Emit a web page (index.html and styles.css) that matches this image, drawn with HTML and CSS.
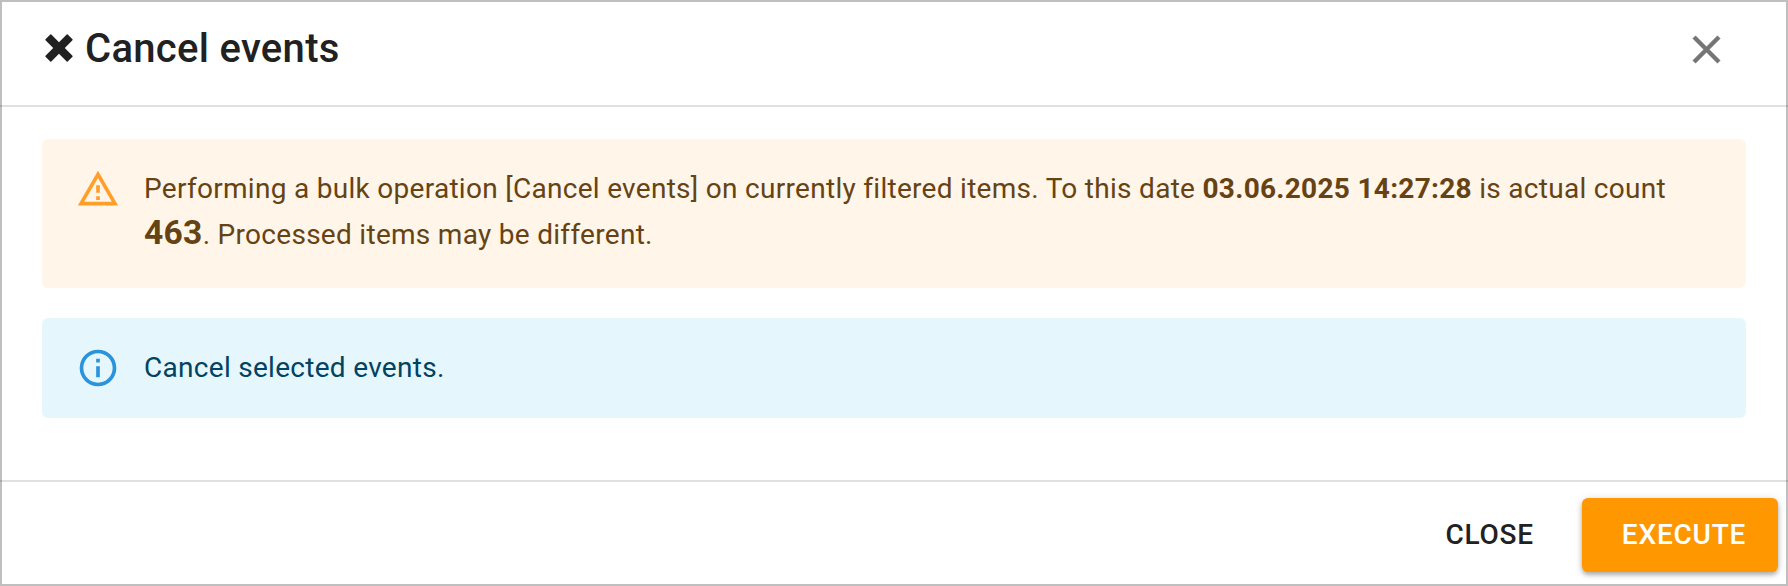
FILE: index.html
```html
<!DOCTYPE html>
<html lang="en">
<head>
    <meta charset="UTF-8">
    <meta name="viewport" content="width=device-width, initial-scale=1.0">
    <title>Cancel events</title>
    <link rel="stylesheet" href="styles.css">
</head>
<body>
    <div class="dialog" role="dialog" aria-labelledby="dialogTitle">
        <!-- Header -->
        <header class="dialog-header">
            <h2 class="dialog-title" id="dialogTitle">
                <svg class="title-icon" viewBox="0 0 27 27" aria-hidden="true">
                    <path d="M6.1 0.5L13.5 7.9L20.9 0.5Q21.4 0 21.9 0.5L26.5 5.1Q27 5.6 26.5 6.1L19.1 13.5L26.5 20.9Q27 21.4 26.5 21.9L21.9 26.5Q21.4 27 20.9 26.5L13.5 19.1L6.1 26.5Q5.6 27 5.1 26.5L0.5 21.9Q0 21.4 0.5 20.9L7.9 13.5L0.5 6.1Q0 5.6 0.5 5.1L5.1 0.5Q5.6 0 6.1 0.5Z"/>
                </svg>
                <span>Cancel events</span>
            </h2>
            <button class="icon-btn" aria-label="Close">
                <svg viewBox="0 0 24 24">
                    <path d="M19 6.41L17.59 5 12 10.59 6.41 5 5 6.41 10.59 12 5 17.59 6.41 19 12 13.41 17.59 19 19 17.59 13.41 12z"/>
                </svg>
            </button>
        </header>

        <!-- Content -->
        <main class="dialog-content">
            <div class="alert alert-warning">
                <svg class="alert-icon" viewBox="0 0 24 24" aria-hidden="true">
                    <path d="M12 5.99L19.53 19H4.47L12 5.99M12 2L1 21h22L12 2zm1 14h-2v2h2v-2zm0-6h-2v4h2v-4z"/>
                </svg>
                <p class="alert-message">Performing a bulk operation [Cancel events] on currently filtered items. To this date <strong>03.06.2025 14:27:28</strong> is actual count <strong class="count">463</strong>. Processed items may be different.</p>
            </div>
            <div class="alert alert-info">
                <svg class="alert-icon" viewBox="0 0 24 24" aria-hidden="true">
                    <path d="M11,9H13V7H11M12,20C7.59,20 4,16.41 4,12C4,7.59 7.59,4 12,4C16.41,4 20,7.59 20,12C20,16.41 16.41,20 12,20M12,2A10,10 0 0,0 2,12A10,10 0 0,0 12,22A10,10 0 0,0 22,12A10,10 0 0,0 12,2M11,17H13V11H11V17Z"/>
                </svg>
                <p class="alert-message">Cancel selected events.</p>
            </div>
        </main>

        <!-- Actions -->
        <footer class="dialog-actions">
            <button class="btn btn-text">Close</button>
            <button class="btn btn-primary">Execute</button>
        </footer>
    </div>
</body>
</html>
```

FILE: styles.css
```css
/* Reset and base styles */
* {
    margin: 0;
    padding: 0;
    box-sizing: border-box;
}

body {
    font-family: Roboto, "Liberation Sans", sans-serif;
    background: #fff;
    color: #212121;
}

/* Dialog */
.dialog {
    position: relative;
    display: flex;
    flex-direction: column;
    height: 100vh;
    overflow: hidden;
}

/* frame drawn over the dividers */
.dialog::after {
    content: "";
    position: absolute;
    inset: 0;
    border: 2px solid rgba(0, 0, 0, 0.25);
    pointer-events: none;
}

.dialog-header {
    display: flex;
    justify-content: space-between;
    align-items: center;
    height: 107px;
    padding: 0 58px 7px 42px;
    border-bottom: 2px solid #e0e0e0;
}

.dialog-title {
    display: flex;
    align-items: center;
    gap: 12px;
    padding-left: 3px;
    font-size: 40px;
    font-weight: 500;
    line-height: 64px;
    letter-spacing: 0.0075em;
}

.title-icon {
    width: 28px;
    height: 28px;
    margin-bottom: 3px;
    fill: currentColor;
}

.icon-btn {
    display: flex;
    border: none;
    background: transparent;
    cursor: pointer;
}

.icon-btn svg {
    width: 47px;
    height: 47px;
    fill: #757575;
    stroke: #757575;
    stroke-width: 0.25;
    stroke-linejoin: round;
}

.dialog-content {
    flex: 1;
    display: flex;
    flex-direction: column;
    gap: 30px;
    padding: 32px 42px;
}

/* Alerts */
.alert {
    display: flex;
    gap: 24px;
    padding: 28px 34px;
    border-radius: 6px;
    font-size: 28px;
    line-height: 1.43;
    letter-spacing: 0.0104em;
}

.alert-icon {
    flex-shrink: 0;
    width: 44px;
    height: 44px;
}

.alert-message {
    padding-top: 2px;
}

.alert-warning {
    height: 149px;
    background: #fff5e8;
    color: #664314;
}

.alert-warning .alert-icon {
    fill: #ff9f2a;
}

.alert-info {
    height: 100px;
    background: #e5f6fd;
    color: #014361;
}

.alert-info .alert-icon {
    fill: #2a93d9;
}

.count {
    font-size: 1.2em;
}

/* Action bar */
.dialog-actions {
    display: flex;
    justify-content: flex-end;
    align-items: flex-start;
    gap: 16px;
    height: 106px;
    padding: 16px 10px 0;
    border-top: 2px solid #e0e0e0;
}

.btn {
    height: 74px;
    padding-bottom: 2px;
    border: none;
    border-radius: 6px;
    font-family: inherit;
    font-size: 28px;
    font-weight: 500;
    letter-spacing: 0.02857em;
    text-transform: uppercase;
    cursor: pointer;
}

.btn-text {
    padding: 0 32px 2px;
    background: transparent;
    color: #212121;
}

.btn-primary {
    width: 196px;
    padding-left: 8px;
    background: #ff9800;
    color: #fff;
    box-shadow: 0 3px 4px rgba(0, 0, 0, 0.25), 0 1px 8px rgba(0, 0, 0, 0.14);
}
```
